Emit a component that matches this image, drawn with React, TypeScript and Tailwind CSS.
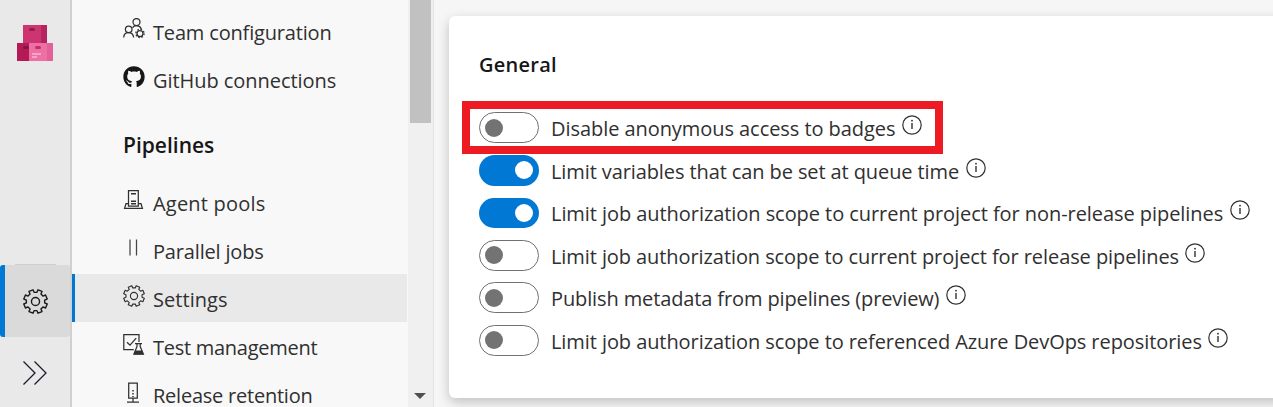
import type { ReactNode } from "react";
import { FaGithub } from "react-icons/fa";

const gearPath = (() => {
  const pts: string[] = [];
  for (let k = 0; k < 8; k++) {
    const mid = 22.5 + k * 45;
    const corners: [number, number][] = [
      [mid - 13.5, 8.9],
      [mid - 10.5, 11.5],
      [mid + 10.5, 11.5],
      [mid + 13.5, 8.9],
    ];
    for (const [deg, r] of corners) {
      const a = (deg * Math.PI) / 180;
      pts.push(`${(12 + r * Math.cos(a)).toFixed(2)} ${(12 + r * Math.sin(a)).toFixed(2)}`);
    }
  }
  return `M${pts.join("L")}Z`;
})();

function Gear({ className, stroke }: { className: string; stroke: number }) {
  return (
    <svg viewBox="0 0 24 24" className={className} fill="none" stroke="currentColor" strokeWidth={stroke} strokeLinejoin="round">
      <path d={gearPath} />
      <circle cx="12" cy="12" r="3.9" />
    </svg>
  );
}

function ProjectLogo() {
  return (
    <svg width="36" height="36" viewBox="0 0 36 36" className="mt-[25px]">
      <rect x="6" width="19" height="18" fill="#cc3570" />
      <rect x="24" width="6" height="18" fill="#b62460" />
      <rect x="12" y="3" width="6" height="3" rx="1.5" fill="#951b4d" />
      <rect y="18" width="12" height="18" fill="#b51a57" />
      <rect x="6" y="21" width="6" height="3" rx="1.5" fill="#861345" />
      <rect x="12" y="18" width="18" height="18" fill="#ed70a3" />
      <rect x="30" y="18" width="6" height="18" fill="#e3609a" />
      <rect x="18" y="21" width="6" height="3" rx="1.5" fill="#c52e6c" />
      <path d="M15 29h9M15 32h5" stroke="#f7a3c6" strokeWidth="2" />
    </svg>
  );
}

function Icon({ children }: { children: ReactNode }) {
  return (
    <svg width="22" height="22" viewBox="0 0 22 22" fill="none" stroke="currentColor" strokeWidth="1.25">
      {children}
    </svg>
  );
}

const teamIcon = (
  <Icon>
    <circle cx="13.5" cy="4" r="3.5" />
    <path d="M9.5 9.7C10.8 7.3 16.4 6.3 18.3 11" />
    <circle cx="5.7" cy="11.3" r="3.3" />
    <path d="M.7 19.5c.2-6.4 9.1-6.5 10 0" />
    <circle cx="17" cy="15.5" r="3" />
    <circle cx="17" cy="15.5" r="4.1" strokeWidth="1.3" strokeDasharray="1.6 1.62" />
  </Icon>
);
const poolIcon = (
  <Icon>
    <path d="M5.5 17V1.6h9.8V17zM5.5 14.7H3L1.6 19.3h17.8L18 14.7h-2.7" />
    <path d="M8 4.7h5M8 12.2h5M8 14.7h5" strokeWidth="1.4" />
  </Icon>
);
const parallelIcon = (
  <Icon>
    <path d="M7 2.5v16M13.5 2.5v16" stroke="#444444" />
  </Icon>
);
const testIcon = (
  <Icon>
    <path d="M16 9V1.5H.8v15h10M4 9.2l3 3 6.2-7" />
    <path d="M12 10.5h7M14 10.5v3L10.9 21h9.5L17.2 13.5v-3" />
    <path d="M12.4 17.5h6.5l1.6 4H10.8z" fill="currentColor" stroke="none" />
  </Icon>
);
const retentionIcon = (
  <Icon>
    <path d="M5.7 17.2V2h8.6v15.2zM10 17.2v3.4M4 21h12" />
    <path d="M10 9v1.5M10 12v1.5M10 15v1" strokeWidth="1.5" />
  </Icon>
);

function NavItem({ icon, label, tracking, active = false, low = false }: { icon: ReactNode; label: string; tracking: string; active?: boolean; low?: boolean }) {
  return (
    <div className={`flex h-12 shrink-0 items-center ${low ? "pt-0.5" : ""} ${active ? "border-l-[3px] border-[#0078d4] bg-[#e9e9e9] pl-[47.5px]" : "pl-[50.5px]"}`}>
      <span className="-mt-1.5 flex h-[22px] w-[22px] items-center justify-center">{icon}</span>
      <span className={`ml-[8.5px] whitespace-nowrap pt-0.5 text-[20px] leading-7 ${tracking}`}>{label}</span>
    </div>
  );
}

function Info() {
  return (
    <svg width="20" height="20" viewBox="0 0 20 20" fill="none" stroke="currentColor" className="-mt-[5px] ml-[5.5px] shrink-0">
      <circle cx="10" cy="10" r="9.2" strokeWidth="1.2" />
      <path d="M10 8v6" strokeWidth="1.4" />
      <circle cx="10" cy="5.7" r=".9" fill="currentColor" stroke="none" />
    </svg>
  );
}

function Toggle({ on }: { on: boolean }) {
  return on ? (
    <span className="flex h-[30.5px] w-[60px] shrink-0 items-center justify-end rounded-full bg-[#0078d4] pr-1.5">
      <span className="h-[18px] w-[18px] rounded-full bg-white" />
    </span>
  ) : (
    <span className="flex h-[31px] w-[60px] shrink-0 items-center rounded-full border border-[#707070] bg-white pl-[5px]">
      <span className="h-[18px] w-[18px] rounded-full bg-[#737373]" />
    </span>
  );
}

const options = [
  { label: "Disable anonymous access to badges", on: false, width: "w-[345px]", tracking: "tracking-[-0.06px]" },
  { label: "Limit variables that can be set at queue time", on: true, width: "w-[409px]", tracking: "tracking-[-0.1px]" },
  { label: "Limit job authorization scope to current project for non-release pipelines", on: true, width: "w-[673px]", tracking: "tracking-[-0.06px]" },
  { label: "Limit job authorization scope to current project for release pipelines", on: false, width: "w-[628px]", tracking: "tracking-[-0.08px]" },
  { label: "Publish metadata from pipelines (preview)", on: false, width: "w-[389px]", tracking: "tracking-[-0.12px]" },
  { label: "Limit job authorization scope to referenced Azure DevOps repositories", on: false, width: "w-[651px]", tracking: "tracking-[-0.075px]" },
];

export default function App() {
  return (
    <div className="flex h-[407px] w-[1273px] overflow-hidden bg-[#f8f8f8] font-['Open_Sans',sans-serif] text-[#303030]">
      <aside className="flex w-[72px] shrink-0 flex-col items-center border-r-2 border-[#d0d0d0] bg-[#e9e9e9]">
        <ProjectLogo />
        <div className="mt-[203px] h-px w-[41px] shrink-0 bg-[#cfcfcf]" />
        <div className="flex h-[72px] w-full shrink-0 items-center justify-center rounded-[3px] border-l-[5px] border-[#0078d4] bg-[#dadada] pr-[5px] text-[#1a1a1a]">
          <Gear className="h-[25px] w-[25px]" stroke={1.35} />
        </div>
        <svg width="26" height="26" viewBox="0 0 26 26" fill="none" stroke="#1b1b2b" strokeWidth="1.3" className="mt-[23px] shrink-0">
          <path d="M1.5 1.5L13 13L1.5 24.5M12.5 1.5L24 13L12.5 24.5" />
        </svg>
      </aside>

      <nav className="flex w-[335px] shrink-0 flex-col pt-2">
        <NavItem icon={teamIcon} label="Team configuration" tracking="tracking-[-0.17px]" />
        <NavItem icon={<FaGithub size={22} color="#171717" />} label="GitHub connections" tracking="tracking-[-0.05px]" />
        <h2 className="flex h-[74px] shrink-0 items-center pt-2.5 pl-[51px] text-[21px] font-semibold text-[#171717]">
          <span>Pipelines</span>
        </h2>
        <NavItem icon={poolIcon} label="Agent pools" tracking="tracking-[0.2px]" low />
        <NavItem icon={parallelIcon} label="Parallel jobs" tracking="tracking-[-0.17px]" low />
        <NavItem icon={<Gear className="h-[22px] w-[22px]" stroke={1.25} />} label="Settings" tracking="tracking-[0.05px]" active low />
        <NavItem icon={testIcon} label="Test management" tracking="tracking-[-0.27px]" low />
        <NavItem icon={retentionIcon} label="Release retention" tracking="tracking-[-0.23px]" low />
      </nav>

      <div className="ml-px flex w-[26px] shrink-0 flex-col items-center justify-between border-r border-[#e3e3e3] bg-[#f0f0f0] pb-2">
        <div className="mr-px h-[123px] w-[21px] bg-[#c1c1c1]" />
        <svg width="12" height="6" viewBox="0 0 12 6" className="mr-px">
          <path d="M0 0h12L6 6z" fill="#505050" />
        </svg>
      </div>

      <main className="flex-1 bg-[#f6f6f6] pt-4 pl-[15px]">
        <section className="h-[382px] w-[900px] rounded-[6px] bg-white pl-[13px] shadow-[0_4px_12px_rgba(0,0,0,0.22)]">
          <h1 className="h-[85px] pt-[34px] pl-[17px] text-[20px] leading-[30px] font-semibold tracking-[0.25px] text-[#171717]">
            <span>General</span>
          </h1>
          {options.map((o, i) => (
            <div
              key={o.label}
              className={
                i === 0
                  ? "flex h-[53px] w-[481px] items-center border-8 border-[#ed1c24] pl-[9px]"
                  : i === 1
                    ? "-mt-[5px] flex h-[42.5px] items-center pl-[17px]"
                    : "flex h-[42.5px] items-center pl-[17px]"
              }
            >
              <Toggle on={o.on} />
              <span className={`ml-3 shrink-0 whitespace-nowrap pt-[3px] text-[20px] leading-7 ${o.width} ${o.tracking}`}>{o.label}</span>
              <Info />
            </div>
          ))}
        </section>
      </main>
    </div>
  );
}
